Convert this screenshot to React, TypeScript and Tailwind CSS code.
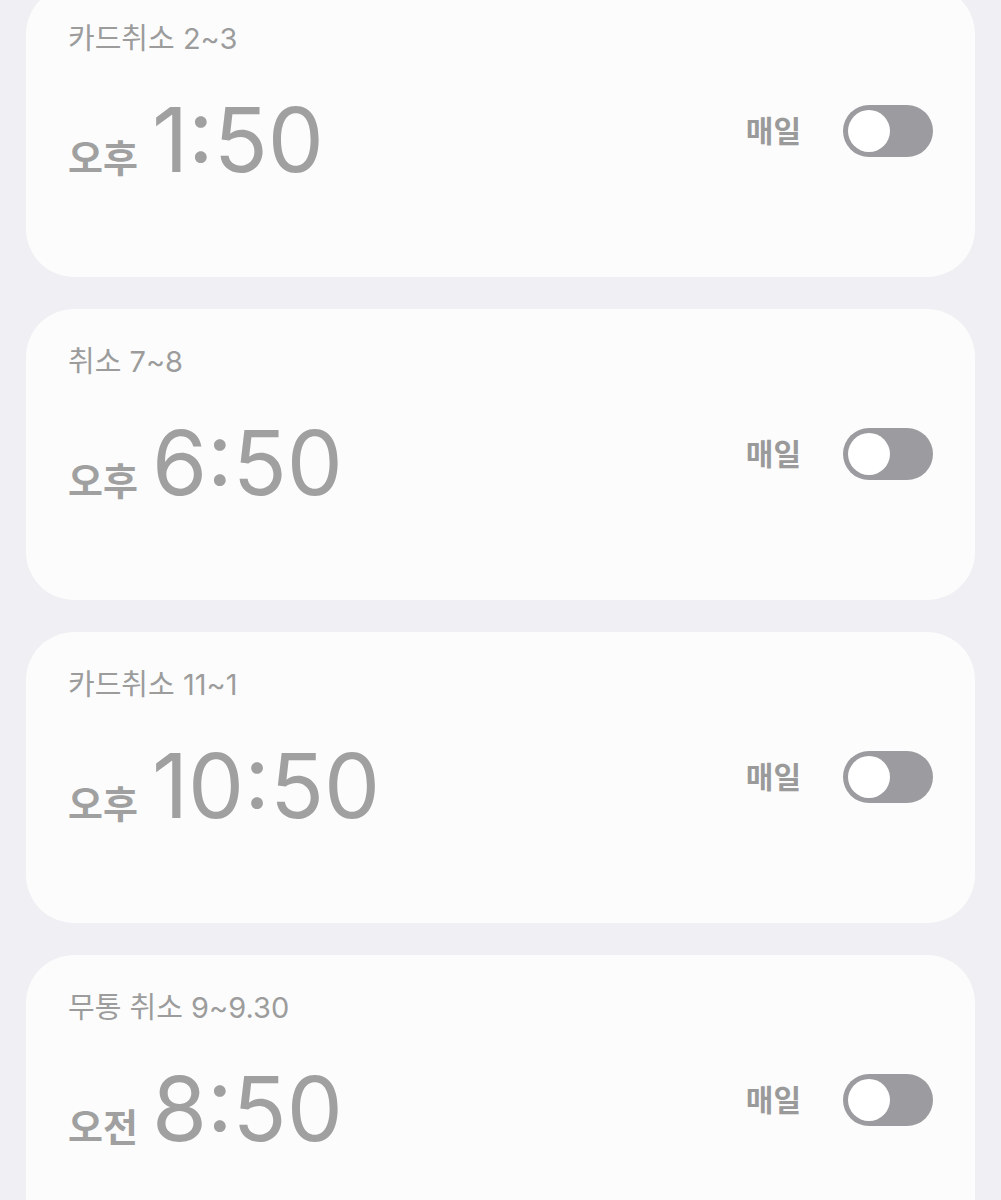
const alarms = [
  { label: '카드취소 2~3', period: '오후', time: '1:50' },
  { label: '취소 7~8', period: '오후', time: '6:50' },
  { label: '카드취소 11~1', period: '오후', time: '10:50' },
  { label: '무통 취소 9~9.30', period: '오전', time: '8:50' },
];

function Toggle() {
  return (
    <div className="w-[90px] h-[52px] rounded-full bg-[#9b9ba0] p-[5px] flex items-center">
      <div className="w-[42px] h-[42px] rounded-full bg-white" />
    </div>
  );
}

function AlarmCard({ label, period, time }: { label: string; period: string; time: string }) {
  return (
    <div className="h-[291px] shrink-0 rounded-[48px] bg-[#fcfcfc] px-[42px] pt-[38px] flex flex-col">
      <div className="text-[29px] leading-[29px] text-[#9c9c9c]">{label}</div>
      <div className="flex justify-between items-start mt-[42px]">
        <div className="flex items-baseline gap-[14px] text-[#a0a0a0]">
          <span className="text-[38px] leading-none font-semibold">{period}</span>
          <span className="text-[89px] leading-none font-normal">{time}</span>
        </div>
        <div className="flex items-center gap-[42px] mt-[10px]">
          <span className="text-[30px] leading-none font-bold text-[#9a9a9a]">매일</span>
          <Toggle />
        </div>
      </div>
    </div>
  );
}

export default function App() {
  return (
    <div
      className="h-[1200px] overflow-hidden bg-[#efeff4] px-[26px]"
      style={{ fontFamily: 'Inter, "Noto Sans CJK KR", sans-serif' }}
    >
      <div className="flex flex-col gap-[32px] -mt-[14px]">
        {alarms.map((a) => (
          <AlarmCard key={a.time} {...a} />
        ))}
      </div>
    </div>
  );
}
